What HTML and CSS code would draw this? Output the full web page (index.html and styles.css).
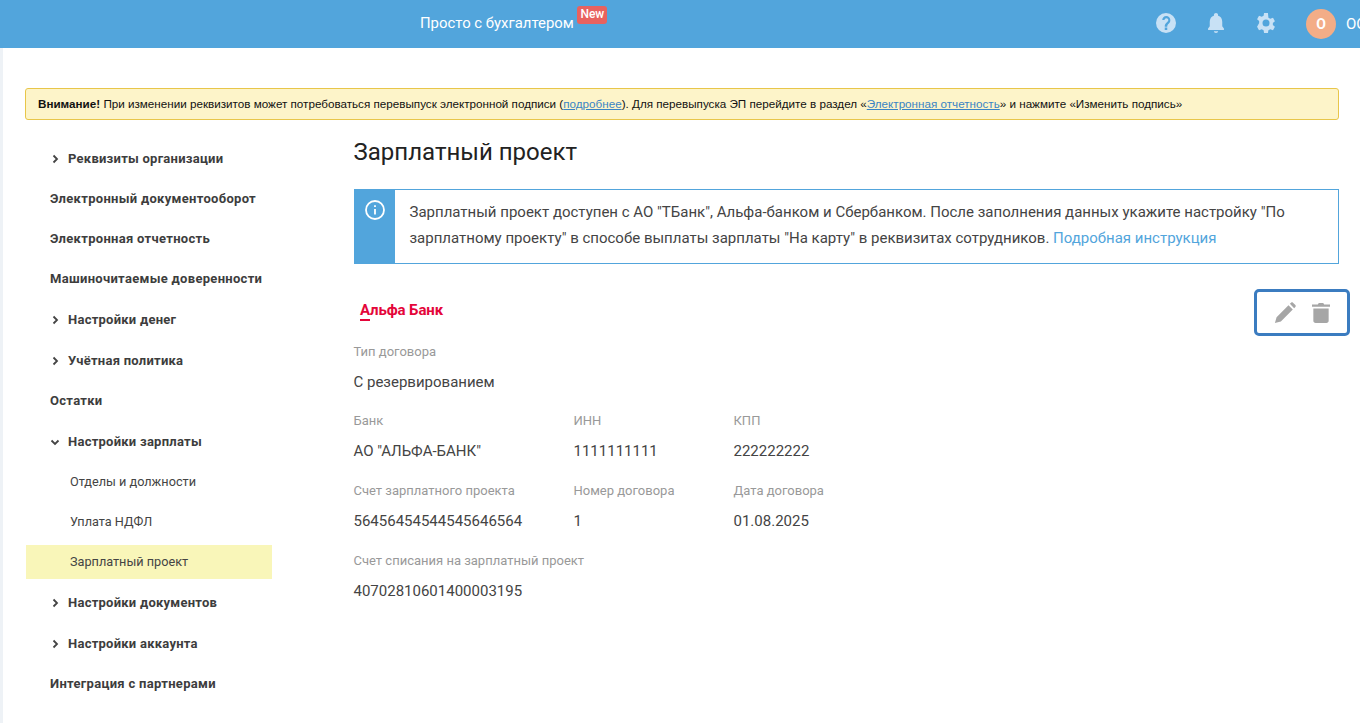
FILE: index.html
```html
<!DOCTYPE html>
<html lang="ru">
<head>
<meta charset="utf-8">
<title>Зарплатный проект</title>
<link rel="stylesheet" href="styles.css">
</head>
<body>
<header class="topbar">
  <div class="brand"><span class="brand-text">Просто с бухгалтером</span><span class="badge-new">New</span></div>
  <div class="top-icons">
    <svg class="ti" viewBox="0 0 24 24"><path fill-rule="evenodd" d="M12 0a12 12 0 1 0 0 24 12 12 0 0 0 0-24zM13.500 20.500h-3v-3h3v3zm3-9-1.300 1.300c-1.100 1-1.700 1.900-1.700 3.700h-3v-.7c0-1.500.6-2.700 1.700-3.800l1.800-1.800c.5-.5.800-1.100.8-1.700 0-1.300-1.100-2.300-2.300-2.300S10.200 7.200 10.200 8.500H7.500c0-2.900 2-5 4.800-5s4.900 2.100 4.900 4.800c0 1.100-.3 2.300-.7 3.200z"/></svg>
    <svg class="ti" viewBox="0 0 24 24"><path d="M12 24c1.400 0 2.500-.8 2.500-2h-5c0 1.200 1.100 2 2.500 2zM21.500 18.500l-2-2.500V10.500c0-3.600-1.800-6.400-5-7.200V2.500C14.500 1.100 13.400 0 12 0S9.500 1.100 9.500 2.500v.8c-3.200.8-5 3.600-5 7.200V16l-2 2.500v2h19z"/></svg>
    <svg class="ti" viewBox="0 0 24 24"><path fill-rule="evenodd" d="M14.300 0h-4.600l-.6 3.300c-.8.300-1.500.7-2.200 1.200L3.600 3.400 1.300 7.400l2.500 2.100c-.1.800-.1 1.700 0 2.600L1.300 16.600l2.300 4 3.300-1.100c.7.500 1.400.9 2.200 1.200l.6 3.300h4.600l.6-3.300c.8-.3 1.500-.7 2.200-1.200l3.300 1.100 2.300-4-2.500-2.100c.1-.9.1-1.800 0-2.600l2.500-2.100-2.300-4-3.300 1.100c-.7-.5-1.400-.9-2.200-1.200zM12 7.800a4.200 4.200 0 1 1 0 8.400 4.200 4.200 0 0 1 0-8.400z"/></svg>
  </div>
  <div class="user"><span class="avatar">О</span><span class="user-name">ООО</span></div>
</header>
<div class="page">
  <div class="notice"><b>Внимание!</b> При изменении реквизитов может потребоваться перевыпуск электронной подписи (<a href="#">подробнее</a>). Для перевыпуска ЭП перейдите в раздел «<a href="#">Электронная отчетность</a>» и нажмите «Изменить подпись»</div>
  <div class="columns">
    <nav class="side">
      <a class="item chev" href="#"><svg class="chevron" viewBox="0 0 10 10"><path d="M3.500 1.500 7 5 3.500 8.500"/></svg>Реквизиты организации</a>
      <a class="item" href="#">Электронный документооборот</a>
      <a class="item" href="#">Электронная отчетность</a>
      <a class="item" href="#">Машиночитаемые доверенности</a>
      <a class="item chev" href="#"><svg class="chevron" viewBox="0 0 10 10"><path d="M3.500 1.500 7 5 3.500 8.500"/></svg>Настройки денег</a>
      <a class="item chev" href="#"><svg class="chevron" viewBox="0 0 10 10"><path d="M3.500 1.500 7 5 3.500 8.500"/></svg>Учётная политика</a>
      <a class="item" href="#">Остатки</a>
      <a class="item chev" href="#"><svg class="chevron" viewBox="0 0 10 10"><path d="M1.500 3.500 5 7 8.500 3.500"/></svg>Настройки зарплаты</a>
      <a class="sub" href="#">Отделы и должности</a>
      <a class="sub" href="#">Уплата НДФЛ</a>
      <a class="sub active" href="#">Зарплатный проект</a>
      <a class="item chev" href="#"><svg class="chevron" viewBox="0 0 10 10"><path d="M3.500 1.500 7 5 3.500 8.500"/></svg>Настройки документов</a>
      <a class="item chev" href="#"><svg class="chevron" viewBox="0 0 10 10"><path d="M3.500 1.500 7 5 3.500 8.500"/></svg>Настройки аккаунта</a>
      <a class="item" href="#">Интеграция с партнерами</a>
    </nav>
    <main class="content">
      <h1 class="title">Зарплатный проект</h1>
      <div class="info">
        <div class="info-side"><svg class="info-icon" viewBox="0 0 20 20"><circle cx="10" cy="10" r="9"/><path d="M10 9v5.500M10 5.200v1.800"/></svg></div>
        <p class="info-text">Зарплатный проект доступен с АО "ТБанк", Альфа-банком и Сбербанком. После заполнения данных укажите настройку "По зарплатному проекту" в способе выплаты зарплаты "На карту" в реквизитах сотрудников. <a href="#">Подробная инструкция</a></p>
      </div>
      <div class="bank-head">
        <div class="bank-logo"><span class="bank-a">А</span>льфа Банк</div>
        <div class="actions">
          <svg class="act" viewBox="0 0 24 24"><path d="M1 23l1.800-6.500L15.800 3.500 20.500 8.200 7.500 21.200zM17.300 2l1.300-1.300c.6-.6 1.500-.6 2.100 0l2.600 2.600c.6.600.6 1.500 0 2.100L22 6.700z"/></svg>
          <svg class="act trash" viewBox="0 0 20 22"><path d="M6.500 1.500 7.500 0h5l1 1.500H20V4H0V1.500zM1.500 6h17v13.500c0 1.400-1 2.500-2.500 2.500H4c-1.500 0-2.500-1.100-2.500-2.500z"/></svg>
        </div>
      </div>
      <div class="fields">
        <div class="field wide first"><span class="label">Тип договора</span><span class="value">С резервированием</span></div>
        <div class="field"><span class="label">Банк</span><span class="value">АО "АЛЬФА-БАНК"</span></div>
        <div class="field"><span class="label">ИНН</span><span class="value">1111111111</span></div>
        <div class="field"><span class="label">КПП</span><span class="value">222222222</span></div>
        <div class="field"><span class="label">Счет зарплатного проекта</span><span class="value">56456454544545646564</span></div>
        <div class="field"><span class="label">Номер договора</span><span class="value">1</span></div>
        <div class="field"><span class="label">Дата договора</span><span class="value">01.08.2025</span></div>
        <div class="field wide"><span class="label">Счет списания на зарплатный проект</span><span class="value">40702810601400003195</span></div>
      </div>
    </main>
  </div>
</div>
</body>
</html>
```
FILE: styles.css
```css
* { box-sizing: border-box; }
html, body { margin: 0; height: 723px; overflow: hidden; background: #fff; }
body { font-family: Roboto, "Noto Sans", sans-serif; color: #333; }
a { text-decoration: none; }

.topbar { height: 48px; background: #52a5dc; display: flex; align-items: center; color: #fff; overflow: hidden; }
.brand { margin-left: 420px; display: flex; align-items: flex-start; height: 48px; }
.brand-text { font-size: 14.900px; line-height: 16px; margin-top: 15px; color: #fff; }
.badge-new { margin: 6px 0 0 3.500px; background: #e8625f; border-radius: 3px; font-size: 12px; font-weight: 500; line-height: 17px; height: 18px; width: 30px; text-align: center; color: #fff; }
.top-icons { margin-left: auto; display: flex; gap: 30px; margin-top: -2px; }
.ti { width: 20px; height: 20px; fill: #c8e1f5; display: block; }
.user { display: flex; align-items: center; margin-left: 30px; width: 54px; flex: none; overflow: hidden; white-space: nowrap; }
.avatar { flex: none; width: 30px; height: 30px; border-radius: 50%; background: #f3ad87; color: #fff; font-size: 14px; font-weight: 700; text-align: center; line-height: 30px; }
.user-name { margin-left: 10px; font-size: 15px; }

.page { height: 675px; border-left: 3px solid #eef2f6; padding: 40px 21px 0 22px; }
.notice { height: 32px; background: #fdf4c9; border: 1px solid #e8c64a; border-radius: 3px; padding: 0 12px; font-family: "Liberation Sans", Arial, sans-serif; font-size: 11.670px; line-height: 30px; color: #111; white-space: nowrap; }
.notice b { font-weight: 700; }
.notice a { color: #3a84c4; text-decoration: underline; }

.columns { display: flex; margin-top: 18px; }
.side { width: 247px; flex: none; display: flex; flex-direction: column; padding-left: 1px; }
.item { height: 40px; display: flex; align-items: center; padding: 0 0 1px 24px; font-size: 13px; font-weight: 700; letter-spacing: .3px; color: #3d3d3d; white-space: nowrap; }
.item.chev { height: 41px; padding: 0 0 0 24px; letter-spacing: .25px; }
.chevron { width: 10px; height: 10px; margin-right: 8px; fill: none; stroke: #444; stroke-width: 1.800; }
.sub { height: 34px; margin: 3px 0; padding: 0 0 1px 44px; display: flex; align-items: center; font-size: 12.700px; color: #444; white-space: nowrap; }
.sub.active { background: #f9f6b9; }

.content { flex: 1; padding-left: 82px; min-width: 0; position: relative; }
.title { margin: 0 0 0 -.5px; font-size: 24px; font-weight: 400; line-height: 28px; color: #222; }
.info { margin-top: 23px; height: 75px; border: 1px solid #52a5dc; display: flex; width: 985px; }
.info-side { width: 40px; flex: none; background: #52a5dc; display: flex; justify-content: center; padding-top: 10px; }
.info-icon { width: 20px; height: 20px; fill: none; stroke: #fff; stroke-width: 1.800; }
.info-text { margin: 0; padding: 9px 20px 0 14.500px; font-size: 15px; line-height: 26px; color: #444; }
.info-text a { color: #52a5dc; }

.bank-head { position: relative; height: 48px; margin-top: 28px; }
.bank-logo { position: absolute; left: 6px; top: 9px; font-size: 15px; font-weight: 700; color: #e4063a; letter-spacing: -.1px; line-height: 18px; }
.bank-a { border-bottom: 2px solid #e4063a; display: inline-block; line-height: 15px; height: 18px; }
.actions { position: absolute; left: 900px; top: -3px; width: 96px; height: 47px; border: 3px solid #3b7cc0; border-radius: 5px; display: flex; align-items: center; gap: 16px; padding-left: 17px; }
.act { width: 22px; height: 22px; fill: #a6a6a6; display: block; }
.act.trash { width: 18px; height: 20px; }

.fields { display: grid; grid-template-columns: 220px 160px 1fr; margin: 2px 0 0 -.5px; }
.field { display: flex; flex-direction: column; height: 70px; }
.field.first { height: 69px; }
.field.wide { grid-column: 1 / -1; }
.label { font-size: 13px; line-height: 16px; color: #999; padding-top: 2px; height: 18px; }
.value { font-size: 15px; line-height: 20px; color: #444; margin-top: 12px; white-space: nowrap; }
```
